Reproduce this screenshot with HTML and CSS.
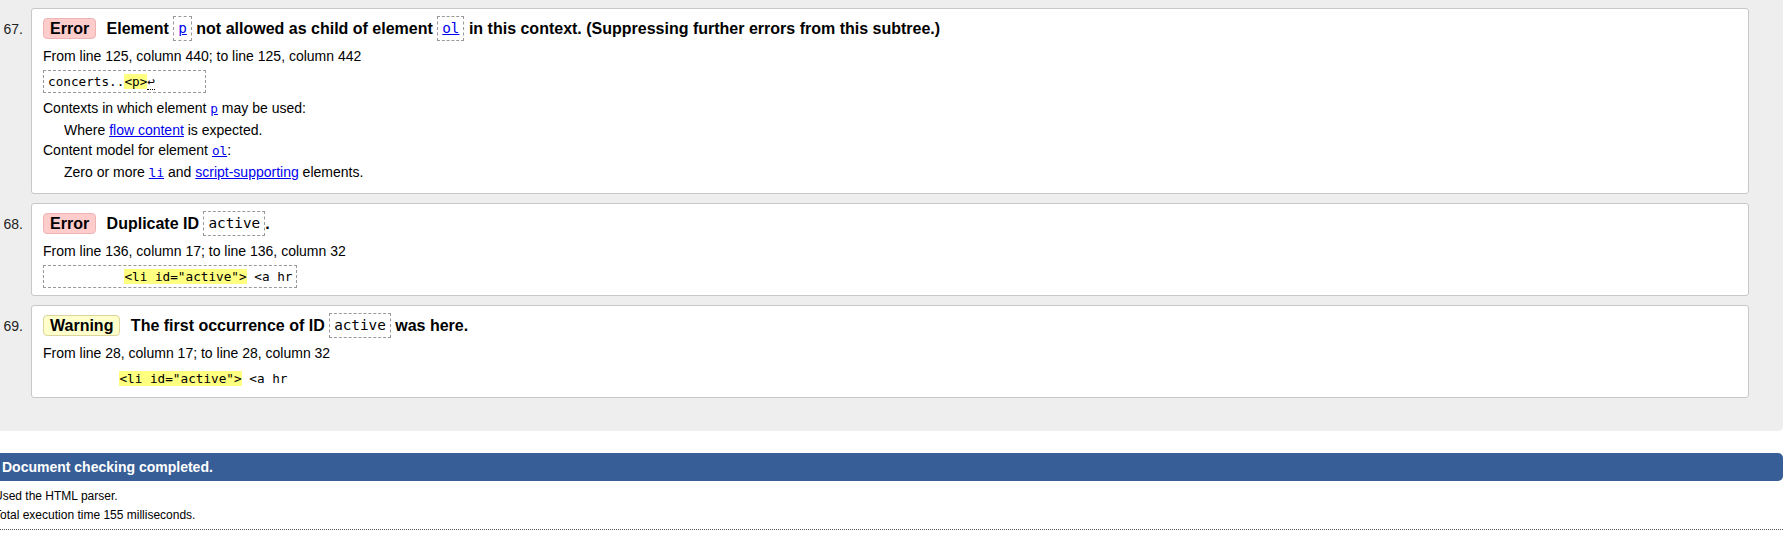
FILE: index.html
```html
<!DOCTYPE html>
<html lang="en">
<head>
<meta charset="utf-8">
<title>Validation results</title>
<link rel="stylesheet" href="styles.css">
</head>
<body>
<ol class="results">
  <li class="msg">
    <span class="num">67.</span>
    <div class="card">
      <p class="title"><strong class="badge badge-error">Error</strong> <span>Element <code class="tcode"><a href="#">p</a></code> not allowed as child of element <code class="tcode"><a href="#">ol</a></code> in this context. (Suppressing further errors from this subtree.)</span></p>
      <p class="loc">From line 125, column 440; to line 125, column 442</p>
      <p class="extract"><code class="ext ext-box">concerts..<mark>&lt;p&gt;</mark><span class="lf">↩</span>      </code></p>
      <dl class="details">
        <dt>Contexts in which element <a href="#"><code class="icode">p</code></a> may be used:</dt>
        <dd>Where <a href="#">flow content</a> is expected.</dd>
        <dt>Content model for element <a href="#"><code class="icode">ol</code></a>:</dt>
        <dd>Zero or more <a href="#"><code class="icode">li</code></a> and <a href="#">script-supporting</a> elements.</dd>
      </dl>
    </div>
  </li>
  <li class="msg">
    <span class="num">68.</span>
    <div class="card">
      <p class="title"><strong class="badge badge-error">Error</strong> <span>Duplicate ID <code class="tcode">active</code>.</span></p>
      <p class="loc">From line 136, column 17; to line 136, column 32</p>
      <p class="extract"><code class="ext ext-box">          <mark>&lt;li id="active"&gt;</mark> &lt;a hr</code></p>
    </div>
  </li>
  <li class="msg">
    <span class="num">69.</span>
    <div class="card">
      <p class="title"><strong class="badge badge-warning">Warning</strong> <span>The first occurrence of ID <code class="tcode">active</code> was here.</span></p>
      <p class="loc">From line 28, column 17; to line 28, column 32</p>
      <p class="extract"><code class="ext ext-plain">          <mark>&lt;li id="active"&gt;</mark> &lt;a hr</code></p>
    </div>
  </li>
</ol>
<div class="footer">
  <h2 class="done">Document checking completed.</h2>
  <p class="stat">Used the HTML parser.</p>
  <p class="stat">Total execution time 155 milliseconds.</p>
  <div class="rule"></div>
</div>
</body>
</html>
```

FILE: styles.css
```css
html, body {
  margin: 0;
  padding: 0;
  background: #fff;
}

body {
  font-family: "Liberation Sans", Arial, sans-serif;
  font-size: 14px;
  color: #000;
  overflow: hidden;
}

a {
  color: #0000ee;
  text-decoration: underline;
}

.results {
  list-style: none;
  margin: 0;
  padding: 8px 34px 33px 0;
  width: 1783px;
  box-sizing: border-box;
  background: #eeeeee;
  border-radius: 0 0 5px 0;
  display: flex;
  flex-direction: column;
  gap: 9px;
}

.msg {
  display: flex;
  align-items: baseline;
}

.num {
  width: 31px;
  flex: none;
  box-sizing: border-box;
  padding-right: 8px;
  text-align: right;
  font-size: 14px;
  color: #222;
}

.card {
  flex: 1;
  background: #fff;
  border: 1px solid #c8c8c8;
  border-radius: 3px;
  padding: 7px 11px 7px 11px;
}

.title {
  margin: 0;
  font-size: 16px;
  font-weight: bold;
  line-height: 26px;
  height: 26px;
  white-space: nowrap;
}

.badge {
  display: inline-block;
  line-height: 19px;
  padding: 0 6px;
  border: 1px solid;
  border-radius: 4px;
  margin-right: 6px;
}

.badge-error {
  background: #ffcccc;
  border-color: #eeb4b4;
}

.badge-warning {
  background: #ffffcc;
  border-color: #dcd49a;
}

.tcode {
  display: inline-block;
  font-family: "DejaVu Sans Mono", "Liberation Mono", monospace;
  font-size: 14.3px;
  font-weight: normal;
  line-height: 19px;
  padding: 2px 4px;
  border: 1px dashed #999;
  vertical-align: 1px;
}

.loc {
  margin: 4px 0 0;
  line-height: 20px;
  height: 20px;
}

.extract {
  margin: 4px 0 0;
  height: 23px;
}

.ext {
  display: inline-block;
  font-family: "DejaVu Sans Mono", "Liberation Mono", monospace;
  font-size: 12.7px;
  line-height: 17px;
  white-space: pre;
  padding: 2px 4px;
}

.ext-box {
  border: 1px dashed #999;
}

.ext-plain {
  border: 1px solid transparent;
  padding-left: 0;
  margin-left: -1px;
}

mark {
  background: #ffff80;
  color: #000;
}

.lf {
  border-bottom: 1px dotted #000;
}

.details {
  margin: 5px 0 4px;
  line-height: 20px;
}

.details dt {
  margin: 0;
  height: 20px;
}

.details dd {
  margin: 2px 0 0 21px;
  height: 20px;
}

.icode {
  font-family: "DejaVu Sans Mono", "Liberation Mono", monospace;
  font-size: 12.7px;
  line-height: 1;
}

.footer {
  margin-left: -6px;
  width: 1789px;
}

.done {
  margin: 22px 0 0;
  height: 28px;
  line-height: 28px;
  background: #375e96;
  color: #fff;
  font-size: 14px;
  font-weight: bold;
  padding-left: 8px;
  border-radius: 5px;
}

.stat {
  margin: 0;
  font-size: 12px;
  line-height: 19px;
}

.done + .stat {
  margin-top: 6px;
}

.rule {
  margin-top: 4px;
  border-bottom: 1px dotted #555;
}
```
